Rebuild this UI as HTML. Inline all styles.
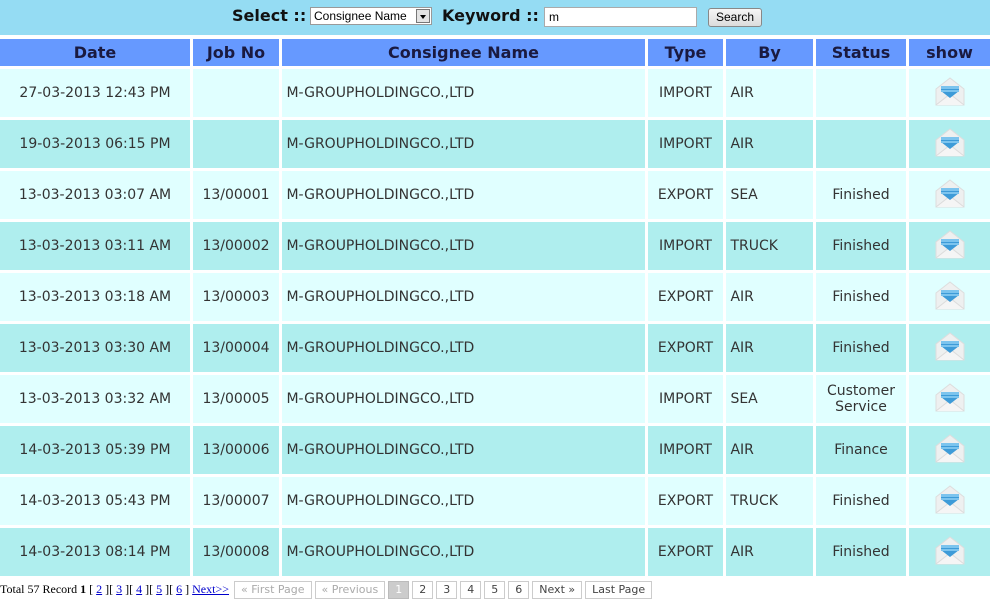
<!DOCTYPE html>
<html><head><style>
body{margin:0;width:990px;height:603px;overflow:hidden;background:#fff;font-family:Verdana,"DejaVu Sans",sans-serif;}
.top{position:absolute;left:0;top:0;width:990px;height:35px;background:#95dcf3;}
.top .s{position:absolute;top:6px;font-weight:bold;font-size:16px;color:#111;}
.sel{position:absolute;left:310px;top:7px;width:122px;height:18px;background:#fff;border:1px solid #999;font:12px "Liberation Sans",sans-serif;line-height:16px;box-sizing:border-box;padding-left:3px}
.sel i{position:absolute;right:1px;top:1px;width:14px;height:14px;background:#e4e4e4;border:1px solid #777;box-sizing:border-box}
.sel i:after{content:"";position:absolute;left:3px;top:5px;border:3px solid transparent;border-top:4px solid #000}
.kw{position:absolute;left:544px;top:7px;width:153px;height:20px;background:#fff;border:1px solid #aaa;box-sizing:border-box;font:12px "Liberation Sans",sans-serif;padding:2px 4px}
.btn{position:absolute;left:708px;top:8px;width:54px;height:19px;border:1px solid #888;border-radius:3px;background:linear-gradient(#f6f6f6,#dcdcdc);box-sizing:border-box;font:12px "Liberation Sans",sans-serif;text-align:center;line-height:17px}
table{position:absolute;left:-3px;top:36px;border-spacing:3px;border-collapse:separate;table-layout:fixed;width:996px}
td,th{padding:0;font-size:14px;overflow:hidden;white-space:nowrap}
th{background:#6699ff;color:#1a1a40;height:27px;font-size:16px;font-weight:bold;}
td{height:48px;color:#333;}
tr.a td{background:#e0ffff}
tr.b td{background:#afeeee}
.c{text-align:center}
.foot{position:absolute;left:0;top:580px;font:12px "Liberation Serif",serif;color:#000;white-space:nowrap;line-height:18px}
.foot a{color:#00c;text-decoration:underline}
.pg{display:inline-block;vertical-align:middle;border:1px solid #ccc;font:11px Verdana,"DejaVu Sans",sans-serif;color:#444;padding:0 6px;margin-left:3px;height:16px;line-height:16px}
.pg.g{color:#aaa}
.pg.on{background:#ccc;color:#fff;border-color:#bbb}
</style></head><body>
<div class="top">
<span class="s" style="left:232px">Select ::</span>
<div class="sel">Consignee Name<i></i></div>
<span class="s" style="left:442px">Keyword ::</span>
<div class="kw">m</div>
<div class="btn">Search</div>
</div>
<svg width="0" height="0" style="position:absolute"><defs><g id="env">
<path d="M2 14 L16 3 L30 14 L30 30 L2 30 Z" fill="#eef0f0" stroke="#ddd"/>
<path d="M2 30 L16 19 L30 30" fill="#f5f5f5" stroke="#dcdcdc"/>
<path d="M7 12 L25 12 L25 16 L16 23 L7 16 Z" fill="#3d9bd8"/>
<rect x="7" y="11" width="18" height="3" fill="#7cc4ee"/>
<rect x="7" y="15" width="18" height="2" fill="#7cc4ee"/>
</g></defs></svg>
<table>
<colgroup><col style="width:190px"><col style="width:86px"><col style="width:363px"><col style="width:75px"><col style="width:87px"><col style="width:90px"><col style="width:81px"></colgroup>
<tr><th>Date</th><th>Job No</th><th>Consignee Name</th><th>Type</th><th>By</th><th>Status</th><th>show</th></tr>
<tr class="a"><td class="c">27-03-2013 12:43 PM</td><td class="c"></td><td>&nbsp;M-GROUPHOLDINGCO.,LTD</td><td class="c">IMPORT</td><td>&nbsp;AIR</td><td class="c"></td><td class="c"><svg width="32" height="32"><use href="#env"/></svg></td></tr>
<tr class="b"><td class="c">19-03-2013 06:15 PM</td><td class="c"></td><td>&nbsp;M-GROUPHOLDINGCO.,LTD</td><td class="c">IMPORT</td><td>&nbsp;AIR</td><td class="c"></td><td class="c"><svg width="32" height="32"><use href="#env"/></svg></td></tr>
<tr class="a"><td class="c">13-03-2013 03:07 AM</td><td class="c">13/00001</td><td>&nbsp;M-GROUPHOLDINGCO.,LTD</td><td class="c">EXPORT</td><td>&nbsp;SEA</td><td class="c">Finished</td><td class="c"><svg width="32" height="32"><use href="#env"/></svg></td></tr>
<tr class="b"><td class="c">13-03-2013 03:11 AM</td><td class="c">13/00002</td><td>&nbsp;M-GROUPHOLDINGCO.,LTD</td><td class="c">IMPORT</td><td>&nbsp;TRUCK</td><td class="c">Finished</td><td class="c"><svg width="32" height="32"><use href="#env"/></svg></td></tr>
<tr class="a"><td class="c">13-03-2013 03:18 AM</td><td class="c">13/00003</td><td>&nbsp;M-GROUPHOLDINGCO.,LTD</td><td class="c">EXPORT</td><td>&nbsp;AIR</td><td class="c">Finished</td><td class="c"><svg width="32" height="32"><use href="#env"/></svg></td></tr>
<tr class="b"><td class="c">13-03-2013 03:30 AM</td><td class="c">13/00004</td><td>&nbsp;M-GROUPHOLDINGCO.,LTD</td><td class="c">EXPORT</td><td>&nbsp;AIR</td><td class="c">Finished</td><td class="c"><svg width="32" height="32"><use href="#env"/></svg></td></tr>
<tr class="a"><td class="c">13-03-2013 03:32 AM</td><td class="c">13/00005</td><td>&nbsp;M-GROUPHOLDINGCO.,LTD</td><td class="c">IMPORT</td><td>&nbsp;SEA</td><td class="c">Customer<br>Service</td><td class="c"><svg width="32" height="32"><use href="#env"/></svg></td></tr>
<tr class="b"><td class="c">14-03-2013 05:39 PM</td><td class="c">13/00006</td><td>&nbsp;M-GROUPHOLDINGCO.,LTD</td><td class="c">IMPORT</td><td>&nbsp;AIR</td><td class="c">Finance</td><td class="c"><svg width="32" height="32"><use href="#env"/></svg></td></tr>
<tr class="a"><td class="c">14-03-2013 05:43 PM</td><td class="c">13/00007</td><td>&nbsp;M-GROUPHOLDINGCO.,LTD</td><td class="c">EXPORT</td><td>&nbsp;TRUCK</td><td class="c">Finished</td><td class="c"><svg width="32" height="32"><use href="#env"/></svg></td></tr>
<tr class="b"><td class="c">14-03-2013 08:14 PM</td><td class="c">13/00008</td><td>&nbsp;M-GROUPHOLDINGCO.,LTD</td><td class="c">EXPORT</td><td>&nbsp;AIR</td><td class="c">Finished</td><td class="c"><svg width="32" height="32"><use href="#env"/></svg></td></tr>
</table>
<div class="foot">Total 57 Record <b>1</b> [ <a>2</a> ][ <a>3</a> ][ <a>4</a> ][ <a>5</a> ][ <a>6</a> ] <a>Next&gt;&gt;</a><span class="pg g" style="margin-left:5px">« First Page</span><span class="pg g">« Previous</span><span class="pg on">1</span><span class="pg">2</span><span class="pg">3</span><span class="pg">4</span><span class="pg">5</span><span class="pg">6</span><span class="pg">Next »</span><span class="pg">Last Page</span></div>
</body></html>
